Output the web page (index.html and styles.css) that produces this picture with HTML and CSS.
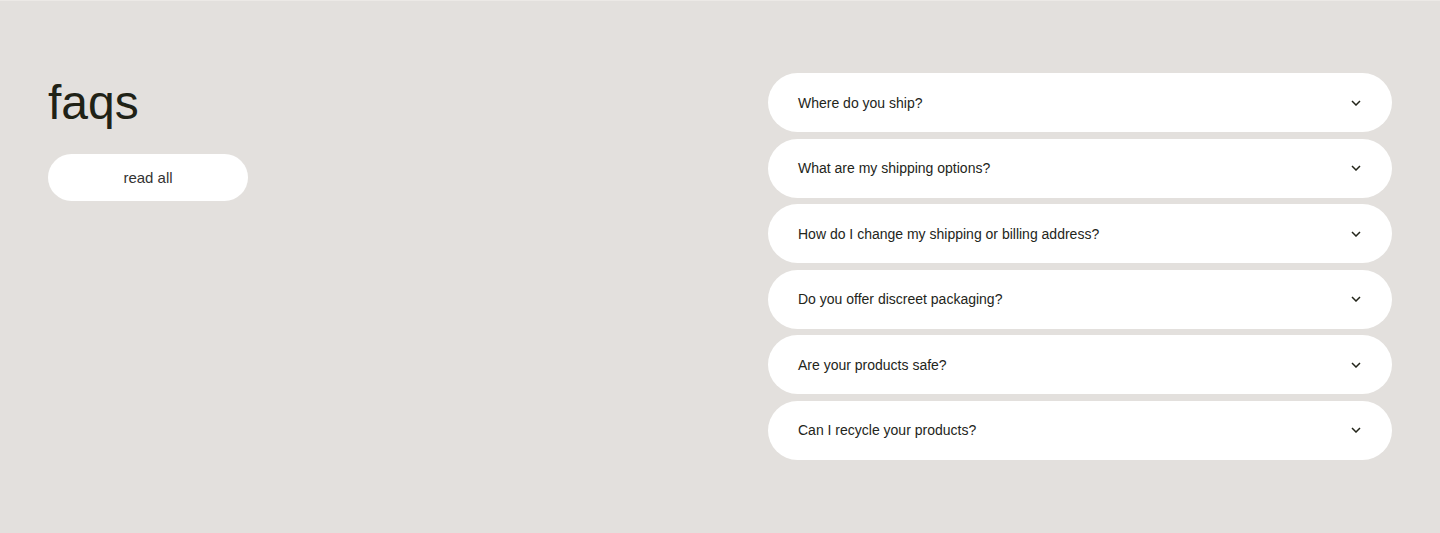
FILE: index.html
```html
<!DOCTYPE html>
<html lang="en">
<head>
  <meta charset="UTF-8">
  <meta name="viewport" content="width=device-width, initial-scale=1">
  <title>FAQs</title>
  <link rel="stylesheet" href="styles.css">
</head>
<body>
  <section class="faqs">
    <!-- Heading + link -->
    <div class="faqs-intro">
      <h2>faqs</h2>
      <a href="#" class="read-all">read all</a>
    </div>

    <!-- Questions -->
    <div class="faq-list">
      <button class="faq-item" type="button">
        <span>Where do you ship?</span>
        <svg class="chev" viewBox="0 0 10 6"><path d="M1 1l4 4 4-4"/></svg>
      </button>
      <button class="faq-item" type="button">
        <span>What are my shipping options?</span>
        <svg class="chev" viewBox="0 0 10 6"><path d="M1 1l4 4 4-4"/></svg>
      </button>
      <button class="faq-item" type="button">
        <span>How do I change my shipping or billing address?</span>
        <svg class="chev" viewBox="0 0 10 6"><path d="M1 1l4 4 4-4"/></svg>
      </button>
      <button class="faq-item" type="button">
        <span>Do you offer discreet packaging?</span>
        <svg class="chev" viewBox="0 0 10 6"><path d="M1 1l4 4 4-4"/></svg>
      </button>
      <button class="faq-item" type="button">
        <span>Are your products safe?</span>
        <svg class="chev" viewBox="0 0 10 6"><path d="M1 1l4 4 4-4"/></svg>
      </button>
      <button class="faq-item" type="button">
        <span>Can I recycle your products?</span>
        <svg class="chev" viewBox="0 0 10 6"><path d="M1 1l4 4 4-4"/></svg>
      </button>
    </div>
  </section>
</body>
</html>
```

FILE: styles.css
```css
* { box-sizing: border-box; }

body {
  margin: 0;
  font-family: 'Liberation Sans', Arial, sans-serif;
  background: #e3e0dd;
  color: #23251a;
  border-top: 1px solid #ece9e6;
}

.faqs {
  display: grid;
  grid-template-columns: 1fr 1fr;
  gap: 96px;
  padding: 72px 48px;
}

.faqs-intro h2 {
  margin: 0;
  font-size: 48px;
  font-weight: 400;
  line-height: 60px;
  color: #202216;
}

.read-all {
  display: flex;
  justify-content: center;
  align-items: center;
  width: 200px;
  height: 47px;
  margin-top: 21px;
  background: #fff;
  border-radius: 24px;
  color: #333;
  font-size: 15px;
  text-decoration: none;
}

.faq-list {
  display: flex;
  flex-direction: column;
  gap: 6.6px;
}

.faq-item {
  display: flex;
  justify-content: space-between;
  align-items: center;
  width: 100%;
  height: 59px;
  padding: 0 30px;
  background: #fff;
  border: none;
  border-radius: 30px;
  font-family: inherit;
  font-size: 14px;
  color: #23251a;
  text-align: left;
  cursor: pointer;
}

.chev {
  width: 10px;
  height: 6px;
  margin-right: 1px;
  fill: none;
  stroke: #23251a;
  stroke-width: 1.5;
}
```
